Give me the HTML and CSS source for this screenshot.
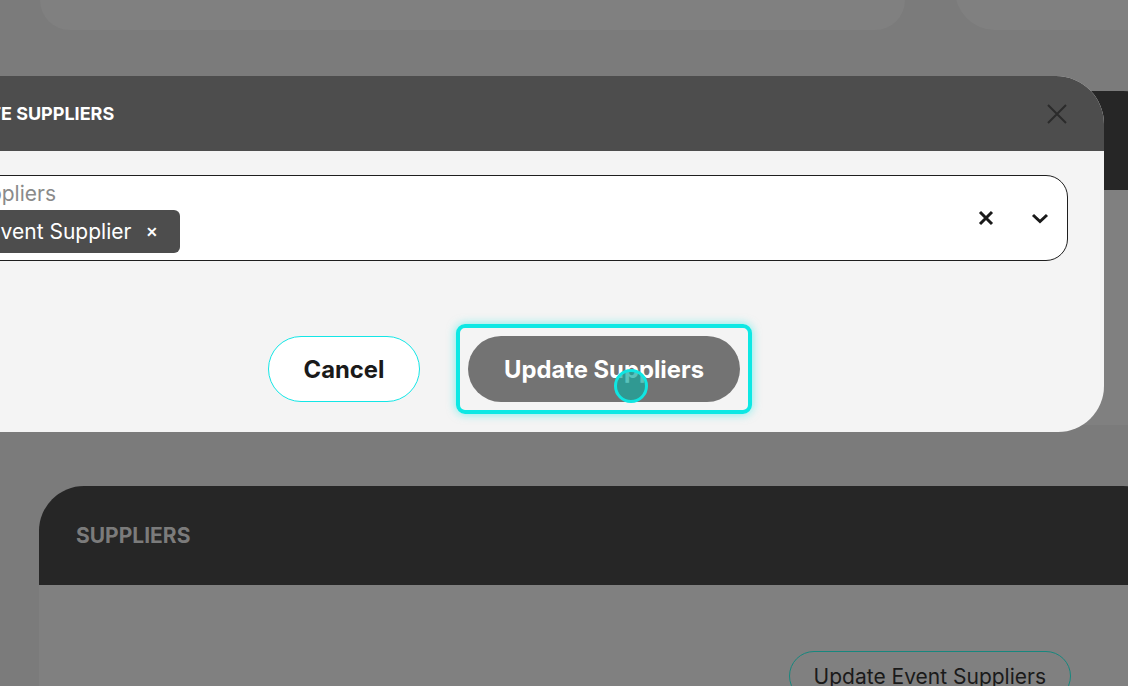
FILE: index.html
```html
<!DOCTYPE html>
<html>
<head>
    <title>Event Suppliers</title>
    <link rel="stylesheet" href="styles.css">
</head>
<body>
    <div class="top-row">
        <div class="top-card card-wide"></div>
        <div class="top-card card-rest"></div>
    </div>

    <div class="page-card mid-card">
        <div class="card-header"></div>
        <div class="card-body"></div>
    </div>

    <div class="page-card suppliers-card">
        <div class="card-header">
            <h2>SUPPLIERS</h2>
        </div>
        <div class="card-body">
            <button class="outline-btn">Update Event Suppliers</button>
        </div>
    </div>

    <div class="modal">
        <div class="modal-header">
            <h3>UPDATE SUPPLIERS</h3>
            <button class="close-btn" aria-label="Close">
                <svg width="20" height="20" viewBox="0 0 20 20"><path d="M1 1 L19 19 M19 1 L1 19" stroke="#2b2b2b" stroke-width="2" fill="none"/></svg>
            </button>
        </div>
        <div class="modal-body">
            <div class="select-field">
                <div class="select-values">
                    <span class="select-label">Suppliers</span>
                    <span class="chip">Event Supplier <span class="chip-x">&#x2715;</span></span>
                </div>
                <div class="select-icons">
                    <svg width="16" height="16" viewBox="0 0 16 16"><path d="M2 2 L14 14 M14 2 L2 14" stroke="#1a1a1a" stroke-width="3" fill="none"/></svg>
                    <svg width="18" height="12" viewBox="0 0 18 12"><path d="M2 3 L9 9.5 L16 3" stroke="#1a1a1a" stroke-width="3" fill="none"/></svg>
                </div>
            </div>
            <div class="modal-actions">
                <button class="btn btn-cancel">Cancel</button>
                <button class="btn btn-primary">Update Suppliers<span class="cursor-dot"></span></button>
            </div>
        </div>
    </div>
</body>
</html>
```

FILE: styles.css
```css
* {
    box-sizing: border-box;
    font-family: Inter, "Noto Sans", sans-serif;
}
body {
    margin: 0;
    width: 1128px;
    height: 686px;
    overflow: hidden;
    position: relative;
    background-color: #7b7b7b;
}
button {
    font-family: Inter, sans-serif;
    cursor: pointer;
}

/* page behind the overlay */
.top-row {
    display: flex;
    gap: 50px;
    padding-left: 40px;
    height: 30px;
}
.top-card {
    height: 60px;
    margin-top: -30px;
    background-color: #808080;
}
.card-wide {
    width: 865px;
    border-radius: 0 0 30px 30px;
}
.card-rest {
    flex: 1;
    border-radius: 0 0 0 40px;
}
.page-card {
    margin-left: 40px;
    margin-right: -40px;
    border-radius: 45px 45px 0 0;
    overflow: hidden;
}
.mid-card {
    margin-top: 61px;
}
.mid-card .card-body {
    height: 235px;
}
.suppliers-card {
    margin-top: 61px;
    margin-left: 39px;
}
.card-header {
    height: 99px;
    background-color: #262626;
    display: flex;
    align-items: center;
    padding-left: 37px;
}
.card-header h2 {
    margin: 0;
    font-size: 21px;
    font-weight: 700;
    color: #7b7b7b;
}
.card-body {
    background-color: #808080;
    height: 200px;
    display: flex;
    justify-content: flex-end;
    align-items: flex-start;
    padding: 66px 97px 0 0;
}
.outline-btn {
    height: 50px;
    padding: 0 24px;
    border: 1px solid #17877e;
    border-radius: 25px;
    background: transparent;
    font-size: 21px;
    color: #1a1a1a;
}

/* modal */
.modal {
    position: absolute;
    left: -96px;
    top: 76px;
    width: 1200px;
    border-radius: 0 48px 46px 0;
    overflow: hidden;
    background-color: #f4f4f4;
}
.modal-header {
    height: 75px;
    background-color: #4d4d4d;
    display: flex;
    align-items: center;
    justify-content: space-between;
    padding: 0 36px 0 36px;
}
.modal-header h3 {
    margin: 0;
    font-size: 18px;
    font-weight: 700;
    color: #fff;
}
.close-btn {
    border: none;
    background: none;
    padding: 0;
    margin-right: 1px;
    display: flex;
}
.modal-body {
    padding: 24px 36px 30px 36px;
}
.select-field {
    height: 86px;
    background-color: #fff;
    border: 1px solid #1f1f1f;
    border-radius: 22px;
    display: flex;
    align-items: center;
    justify-content: space-between;
    padding: 0 18px 0 22px;
}
.select-values {
    display: flex;
    flex-direction: column;
    align-items: flex-start;
    gap: 4px;
    padding-bottom: 2px;
}
.select-label {
    font-size: 21px;
    line-height: 25px;
    color: #8a8a8a;
}
.chip {
    margin-left: 12px;
    height: 43px;
    display: flex;
    align-items: center;
    gap: 15px;
    padding: 0 22px 0 13px;
    border-radius: 6px;
    background-color: #4d4d4d;
    color: #fff;
    font-size: 21px;
}
.chip-x {
    font-size: 14px;
    font-weight: 700;
}
.select-icons {
    display: flex;
    align-items: center;
    gap: 37px;
}
.modal-actions {
    display: flex;
    justify-content: center;
    gap: 48px;
    margin-top: 75px;
}
.btn {
    height: 66px;
    border-radius: 33px;
    font-size: 23.8px;
    font-weight: 700;
}
.btn-cancel {
    width: 152px;
    background-color: #fff;
    border: 1px solid #14e6e6;
    color: #1a1a1a;
}
.btn-primary {
    position: relative;
    width: 272px;
    background-color: #737373;
    border: none;
    color: #fff;
}
.btn-primary::after {
    content: "";
    position: absolute;
    inset: -12px;
    border: 4px solid #0de8e4;
    border-radius: 9px;
    box-shadow: 0 0 10px rgba(13, 232, 228, 0.55);
}
.cursor-dot {
    position: absolute;
    left: 146px;
    top: 33px;
    width: 34px;
    height: 34px;
    border-radius: 50%;
    border: 3px solid #10e6e2;
    background-color: rgba(20, 170, 160, 0.7);
}
```
